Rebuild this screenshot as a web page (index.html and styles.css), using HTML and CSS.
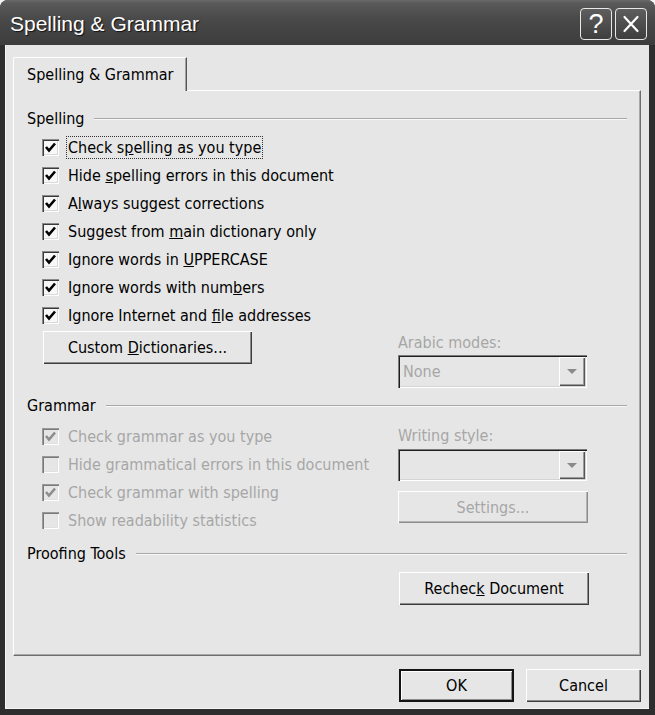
FILE: index.html
```html
<!DOCTYPE html>
<html>
<head>
<meta charset="utf-8">
<title>Spelling &amp; Grammar</title>
<link rel="stylesheet" href="styles.css">
</head>
<body>
<div class="window">
  <div class="titlebar">
    <span class="title">Spelling &amp; Grammar</span>
    <div class="caption-buttons">
      <span class="cbtn help">?</span>
      <span class="cbtn close"><svg width="20" height="20" viewBox="0 0 20 20"><path d="M3.5 3 L16.5 17 M16.5 3 L3.5 17" stroke="#fff" stroke-width="2.2" stroke-linecap="round"/></svg></span>
    </div>
  </div>
  <div class="client">
    <div class="tabstrip"><div class="tab">Spelling &amp; Grammar</div></div>
    <div class="panel">
      <div class="group-head"><span>Spelling</span><span class="rule"></span></div>
      <div class="checks">
        <div class="check on"><span class="box"><svg viewBox="0 0 17 17"><path d="M4 8 L7 11.5 L13 4.5" fill="none" stroke="#000" stroke-width="2.6"/></svg></span><span class="lbl focus">Check s<u>p</u>elling as you type</span></div>
        <div class="check on"><span class="box"><svg viewBox="0 0 17 17"><path d="M4 8 L7 11.5 L13 4.5" fill="none" stroke="#000" stroke-width="2.6"/></svg></span><span class="lbl">Hide <u>s</u>pelling errors in this document</span></div>
        <div class="check on"><span class="box"><svg viewBox="0 0 17 17"><path d="M4 8 L7 11.5 L13 4.5" fill="none" stroke="#000" stroke-width="2.6"/></svg></span><span class="lbl">A<u>l</u>ways suggest corrections</span></div>
        <div class="check on"><span class="box"><svg viewBox="0 0 17 17"><path d="M4 8 L7 11.5 L13 4.5" fill="none" stroke="#000" stroke-width="2.6"/></svg></span><span class="lbl">Suggest from <u>m</u>ain dictionary only</span></div>
        <div class="check on"><span class="box"><svg viewBox="0 0 17 17"><path d="M4 8 L7 11.5 L13 4.5" fill="none" stroke="#000" stroke-width="2.6"/></svg></span><span class="lbl">Ignore words in <u>U</u>PPERCASE</span></div>
        <div class="check on"><span class="box"><svg viewBox="0 0 17 17"><path d="M4 8 L7 11.5 L13 4.5" fill="none" stroke="#000" stroke-width="2.6"/></svg></span><span class="lbl">Ignore words with num<u>b</u>ers</span></div>
        <div class="check on"><span class="box"><svg viewBox="0 0 17 17"><path d="M4 8 L7 11.5 L13 4.5" fill="none" stroke="#000" stroke-width="2.6"/></svg></span><span class="lbl">Ignore Internet and <u>f</u>ile addresses</span></div>
      </div>
      <div class="split spell-split">
        <div class="left"><button class="btn dict">Custom <u>D</u>ictionaries...</button></div>
        <div class="right">
          <div class="field-label">Arabic modes:</div>
          <div class="select"><span class="value">None</span><span class="drop"><span class="tri"></span></span></div>
        </div>
      </div>

      <div class="group-head grammar-head"><span>Grammar</span><span class="rule"></span></div>
      <div class="split gram-split">
        <div class="left checks">
          <div class="check on disabled"><span class="box"><svg viewBox="0 0 17 17"><path d="M4 8 L7 11.5 L13 4.5" fill="none" stroke="#8c8c8c" stroke-width="2.6"/></svg></span><span class="lbl">Check grammar as you type</span></div>
          <div class="check disabled"><span class="box"></span><span class="lbl">Hide grammatical errors in this document</span></div>
          <div class="check on disabled"><span class="box"><svg viewBox="0 0 17 17"><path d="M4 8 L7 11.5 L13 4.5" fill="none" stroke="#8c8c8c" stroke-width="2.6"/></svg></span><span class="lbl">Check grammar with spelling</span></div>
          <div class="check disabled"><span class="box"></span><span class="lbl">Show readability statistics</span></div>
        </div>
        <div class="right gram-right">
          <div class="field-label">Writing style:</div>
          <div class="select short"><span class="value"></span><span class="drop"><span class="tri"></span></span></div>
          <button class="btn settings" disabled>Settings...</button>
        </div>
      </div>

      <div class="group-head proof-head"><span>Proofing Tools</span><span class="rule"></span></div>
      <div class="split">
        <div class="left"></div>
        <div class="right"><button class="btn recheck">Rechec<u>k</u> Document</button></div>
      </div>
    </div>
    <div class="footer">
      <button class="btn default">OK</button>
      <button class="btn">Cancel</button>
    </div>
  </div>
</div>
</body>
</html>
```
FILE: styles.css
```css
html, body {
  margin: 0;
  padding: 0;
}
body {
  width: 655px;
  height: 715px;
  overflow: hidden;
  background: #f4f4f4;
  font-family: "DejaVu Sans Condensed", "DejaVu Sans", sans-serif;
  font-size: 16px;
  color: #000;
}
.window {
  height: 715px;
  display: flex;
  flex-direction: column;
  background: #2e2e2e;
  border-radius: 8px 8px 0 0;
  overflow: hidden;
}
.titlebar {
  height: 45px;
  flex: none;
  display: flex;
  align-items: center;
  justify-content: space-between;
  padding: 0 8px 0 10px;
  background: linear-gradient(#6a6a6a 0, #5a5a5a 3px, #4a4a4a 40%, #3c3c3c 100%);
}
.title {
  color: #fff;
  font-family: "Liberation Sans", sans-serif;
  font-size: 21px;
  text-shadow: 1px 1px 1px #111;
  margin-top: 2px;
}
.caption-buttons {
  display: flex;
  gap: 3px;
  margin-top: 3px;
}
.cbtn {
  width: 30px;
  height: 30px;
  border: 1.5px solid #e8e8e8;
  border-radius: 4px;
  background: linear-gradient(#5e5e5e, #3e3e3e);
  display: flex;
  align-items: center;
  justify-content: center;
  color: #fff;
}
.help {
  font-family: "Liberation Sans", sans-serif;
  font-size: 27px;
  line-height: 1;
}
.client {
  flex: 1;
  margin: 0 6px 6px 5px;
  background: #e6e6e6;
  box-shadow: inset 1px 0 0 #f6f6f6, inset 0 -1px 0 #f6f6f6;
  padding-top: 12px;
  display: flex;
  flex-direction: column;
}
.tabstrip {
  padding-left: 8px;
  display: flex;
  position: relative;
  z-index: 1;
  margin-bottom: -1px;
}
.tab {
  width: 174px;
  height: 34px;
  box-sizing: border-box;
  border-top: 1px solid #fff;
  border-left: 1px solid #fff;
  border-right: 1px solid #555;
  border-top-left-radius: 2px;
  box-shadow: inset -1px 0 0 #a0a0a0;
  background: #e6e6e6;
  padding: 7px 0 0 13px;
  white-space: nowrap;
}
.panel {
  margin: 0 8px;
  height: 566px;
  box-sizing: border-box;
  border-top: 1px solid #fff;
  border-left: 1px solid #fff;
  border-right: 1px solid #6e6e6e;
  border-bottom: 1px solid #6e6e6e;
  box-shadow: inset -1px -1px 0 #a8a8a8;
  padding: 18px 13px 0 13px;
}
.group-head {
  height: 20px;
  display: flex;
  align-items: center;
  gap: 10px;
  line-height: 20px;
}
.rule {
  flex: 1;
  height: 1px;
  background: #a8a8a8;
  border-bottom: 1px solid #f8f8f8;
}
.checks {
  display: flex;
  flex-direction: column;
}
.group-head + .checks {
  margin-top: 4px;
}
.check {
  height: 28px;
  display: flex;
  align-items: center;
  padding-left: 15px;
}
.box {
  width: 17px;
  height: 17px;
  box-sizing: border-box;
  flex: none;
  background: #f7f7f7;
  box-shadow: inset 1px 1px 0 #8a8a8a, inset 2px 2px 0 #3a3a3a, inset -1px -1px 0 #ffffff, inset -2px -2px 0 #d8d8d8;
  display: flex;
}
.box svg {
  width: 17px;
  height: 17px;
}
.lbl {
  margin-left: 7px;
  padding: 1px;
  border: 1px dotted transparent;
  white-space: nowrap;
}
.lbl.focus {
  border-color: #333;
}
.disabled .box {
  background: #e6e6e6;
  box-shadow: inset 1px 1px 0 #9a9a9a, inset 2px 2px 0 #7a7a7a, inset -1px -1px 0 #ffffff, inset -2px -2px 0 #e0e0e0;
}
.disabled .lbl, .field-label {
  color: #a6a6a6;
}
.split {
  display: flex;
}
.split .left {
  width: 371px;
  flex: none;
}
.split .right {
  width: 192px;
  display: flex;
  flex-direction: column;
}
.spell-split {
  margin-top: 2px;
}
.field-label {
  height: 20px;
  line-height: 20px;
  margin-top: 2px;
}
.select {
  margin-top: 2px;
  width: 189px;
  height: 33px;
  box-sizing: border-box;
  background: #e6e6e6;
  box-shadow: inset 1px 1px 0 #7a7a7a, inset 2px 2px 0 #1e1e1e, inset -1px -1px 0 #ffffff, inset -2px -2px 0 #d4d4d4;
  display: flex;
  align-items: center;
  padding: 2px;
}
.select.short {
  height: 32px;
  margin-top: 3px;
}
.value {
  flex: 1;
  color: #a6a6a6;
  padding-left: 3px;
}
.drop {
  width: 26px;
  align-self: stretch;
  background: #e6e6e6;
  box-shadow: inset 1px 1px 0 #fff, inset -1px -1px 0 #555, inset -2px -2px 0 #9a9a9a;
  display: flex;
  align-items: center;
  justify-content: center;
}
.tri {
  width: 0;
  height: 0;
  border-left: 5px solid transparent;
  border-right: 5px solid transparent;
  border-top: 5px solid #8a8a8a;
}
.btn {
  height: 33px;
  padding: 0;
  border: none;
  background: #e6e6e6;
  font-family: inherit;
  font-size: 16px;
  color: #000;
  box-shadow: inset 1px 1px 0 #ffffff, inset -1px -1px 0 #3c3c3c, inset -2px -2px 0 #8c8c8c;
}
.btn u {
  text-decoration-thickness: 1px;
}
.dict {
  margin-left: 16px;
  width: 209px;
}
.grammar-head {
  margin-top: 8px;
}
.gram-split {
  margin-top: 6px;
}
.gram-right {
  padding-top: 2px;
}
.settings {
  margin-top: 10px;
  width: 190px;
  height: 32px;
  color: #a6a6a6;
  box-shadow: inset 1px 1px 0 #ffffff, inset -1px -1px 0 #8c8c8c, inset -2px -2px 0 #b4b4b4;
}
.proof-head {
  margin-top: 10px;
}
.recheck {
  margin-top: 8px;
  width: 190px;
  margin-left: 1px;
}
.footer {
  margin-top: 13px;
  display: flex;
  justify-content: flex-end;
  gap: 12px;
  padding-right: 8px;
}
.footer .btn {
  width: 115px;
}
.footer .default {
  box-shadow: inset 0 0 0 2px #141414, inset 3px 3px 0 #ffffff, inset -3px -3px 0 #8c8c8c;
}
```
